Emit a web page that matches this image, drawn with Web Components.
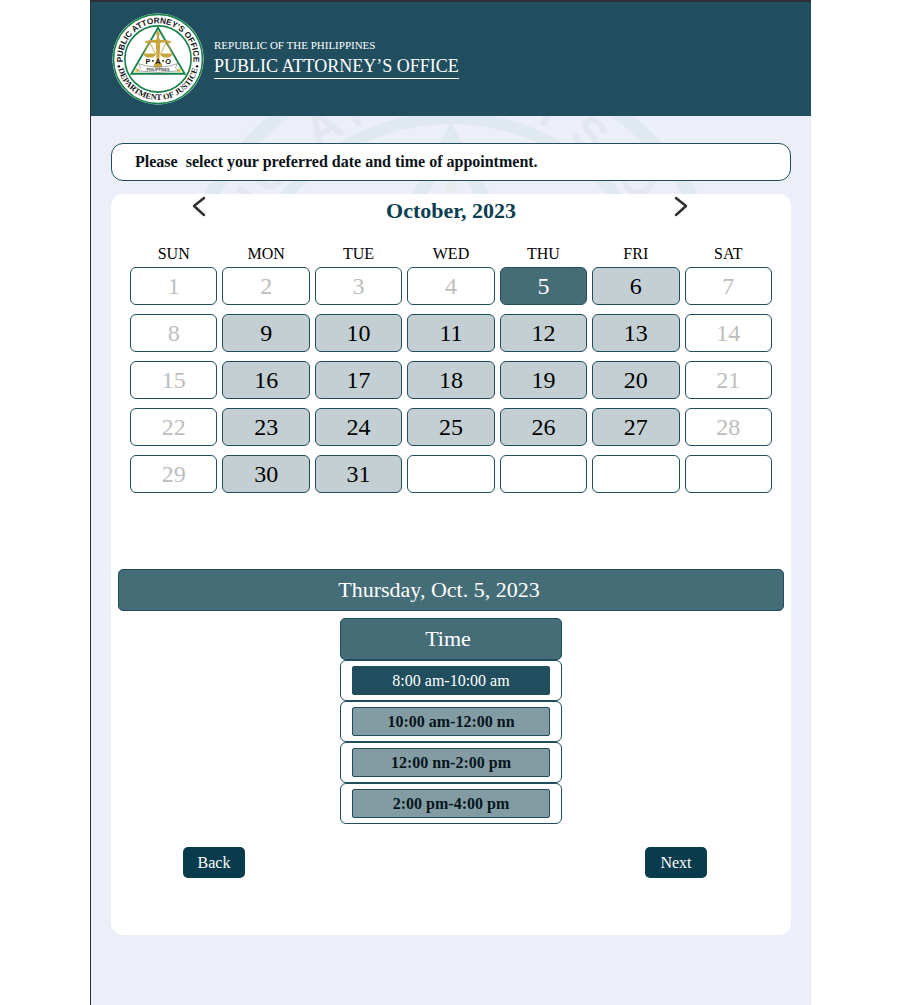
<!DOCTYPE html>
<html lang="en">
<head>
<meta charset="utf-8">
<meta name="viewport" content="width=device-width, initial-scale=1">
<title>Public Attorney's Office - Appointment</title>
<style>
  body { margin: 0; background: #fff; font-family: "Liberation Serif", "Times New Roman", serif; }
</style>
</head>
<body>
<booking-page>
  <office-header slot="header">
    <pao-seal></pao-seal>
    <span slot="country">REPUBLIC OF THE PHILIPPINES</span>
    <span slot="office">PUBLIC ATTORNEY’S OFFICE</span>
  </office-header>
  <notice-bar>Please&nbsp; select your preferred date and time of appointment.</notice-bar>
  <booking-card>
    <month-calendar slot="calendar" days="31" open="6 9 10 11 12 13 16 17 18 19 20 23 24 25 26 27 30 31" selected="5">October, 2023</month-calendar>
    <time-picker slot="times" slots="8:00 am-10:00 am|10:00 am-12:00 nn|12:00 nn-2:00 pm|2:00 pm-4:00 pm" selected="0">Thursday, Oct. 5, 2023</time-picker>
    <nav-button slot="actions">Back</nav-button>
    <nav-button slot="actions">Next</nav-button>
  </booking-card>
</booking-page>

<script>
class ShadowElement extends HTMLElement {
  render(html) {
    this.attachShadow({ mode: "open" }).innerHTML = html;
  }
}

customElements.define("pao-seal", class extends ShadowElement {
  connectedCallback() {
    this.render(`
      <style>
        :host { display: block; width: 92px; height: 92px; flex: none; }
        svg { display: block; width: 100%; height: 100%; }
        .disc { fill: #fff; }
        .ring { fill: none; stroke: #16824a; }
        .gold { fill: #c9a540; }
        .star { fill: #e8c23c; }
        .chain { fill: none; stroke: #c9a540; stroke-width: 1; }
        .ribbon { fill: #fff; stroke: #777; stroke-width: .7; }
        text { font-family: "Liberation Sans", Arial, sans-serif; font-weight: 700; fill: #151515; text-anchor: middle; }
        .arc { font-size: 9px; }
        .dept { font-family: "Liberation Serif", serif; font-size: 9px; }
        .pao { font-size: 8px; }
        .phil { font-size: 4px; fill: #444; }
      </style>
      <svg viewBox="0 0 100 100" role="img" aria-label="Seal of the Public Attorney's Office">
        <defs>
          <path id="top" d="M12 56 A38.500 38.500 0 1 1 88 56"/>
          <path id="bottom" d="M5.500 50 A44.500 44.500 0 0 0 94.500 50"/>
        </defs>
        <circle cx="50" cy="50" r="49.500" class="disc"/>
        <circle cx="50" cy="50" r="48.300" class="ring" stroke-width="1.600"/>
        <circle cx="50" cy="50" r="36" class="ring" stroke-width="1.800"/>
        <path d="M50 16 L79 66 H21 Z" class="ring" stroke-width="2"/>
        <path class="gold" d="M50 19l2 3-1 4 1.500 4-1 22 3 4v5h-9v-5l3-4-1-22L49 26l-1-4z"/>
        <path class="gold" d="M36 31q7-3 14-1 7-2 14 1v2q-7-2-14 0-7-2-14 0z"/>
        <path class="gold" d="M34 44h14q-1 4.500-7 4.500T34 44zM52 44h14q-1 4.500-7 4.500T52 44z"/>
        <path class="chain" d="M40 32l-5 12M41 32l6 12M60 32l5 12M59 32l-6 12"/>
        <path class="star" d="M27 59.500l.8 1.700 1.900.2-1.400 1.300.4 1.900-1.700-.9-1.700.9.4-1.900-1.400-1.300 1.900-.2zM73 59.500l.8 1.700 1.900.2-1.400 1.300.4 1.900-1.700-.9-1.700.9.400-1.900-1.400-1.300 1.900-.2z"/>
        <path class="ribbon" d="M29 55l8 2.500q13 3 26 0l8-2.500-2 4.500 3 3.500-8 .5q-14 2-28 0l-8-.5 3-3.500z"/>
        <text class="arc"><textPath href="#top" startOffset="50%">PUBLIC ATTORNEY'S OFFICE</textPath></text>
        <text class="dept"><textPath href="#bottom" startOffset="50%">DEPARTMENT OF JUSTICE</textPath></text>
        <circle cx="7.500" cy="58" r="1.300"/><circle cx="92.500" cy="58" r="1.300"/>
        <text class="pao" x="39" y="55">P</text>
        <text class="pao" x="50" y="55">A</text>
        <text class="pao" x="61" y="55">O</text>
        <circle cx="44.500" cy="52" r="1"/><circle cx="55.500" cy="52" r="1"/>
        <text class="phil" x="50" y="62.500">PHILIPPINES</text>
      </svg>`);
  }
});

customElements.define("seal-watermark", class extends ShadowElement {
  connectedCallback() {
    const letters = [["I", -56], ["C", -49], ["A", -32], ["T", -24], ["Y", 24], ["S", 35], ["O", 51], ["F", 61]];
    this.render(`
      <style>
        :host { display: block; overflow: hidden; }
        svg { display: block; width: 580px; margin: -74px auto 0; overflow: visible; }
        .ring { fill: none; stroke: #e1e9f0; }
        .dot { fill: #e9ebec; }
        text { font: 700 46px "Liberation Sans", Arial, sans-serif; fill: #e3e7ef; text-anchor: middle; }
      </style>
      <svg viewBox="0 0 580 580" aria-hidden="true">
        <circle class="ring" cx="290" cy="290" r="276" stroke-width="14"/>
        <circle class="ring" cx="290" cy="290" r="214" stroke-width="12"/>
        <path class="ring" stroke-width="14" d="M290 95 L440 373 H140 Z"/>
        <circle class="dot" cx="290" cy="145" r="6"/>
        ${letters.map(([c, a]) => `<text x="290" y="64" transform="rotate(${a} 290 290)">${c}</text>`).join("")}
      </svg>`);
  }
});

customElements.define("booking-page", class extends ShadowElement {
  connectedCallback() {
    this.render(`
      <style>
        :host { display: block; box-sizing: border-box; min-height: 100vh; margin: 0 calc(10% - 1px) 0 10%;
          border-left: 1px solid #2e2e33; background: #eceff8; }
        .body { position: relative; padding: 27px 20px 70px; }
        seal-watermark { position: absolute; inset: 0; }
        main { position: relative; display: flex; flex-direction: column; gap: 13px; }
      </style>
      <slot name="header"></slot>
      <div class="body">
        <seal-watermark></seal-watermark>
        <main><slot></slot></main>
      </div>`);
  }
});

customElements.define("office-header", class extends ShadowElement {
  connectedCallback() {
    this.render(`
      <style>
        :host { display: block; }
        header { display: flex; align-items: center; gap: 10px; box-sizing: border-box; height: 116px;
          padding: 0 21px; border-top: 2px solid #2e2e33; background: #204e5e; color: #fff; }
        .names { display: flex; flex-direction: column; gap: 4px; }
        .country { font-size: 11px; line-height: 13px; }
        h1 { margin: 0; padding-bottom: 2px; border-bottom: 1px solid #fff; font-size: 18px; line-height: 20px; font-weight: 400; }
      </style>
      <header>
        <slot></slot>
        <div class="names">
          <div class="country"><slot name="country"></slot></div>
          <h1><slot name="office"></slot></h1>
        </div>
      </header>`);
  }
});

customElements.define("notice-bar", class extends ShadowElement {
  connectedCallback() {
    this.render(`
      <style>
        :host { display: block; }
        p { margin: 0; padding: 9px 23px; border: 1px solid #204e5e; border-radius: 12px; background: #fff;
          color: #0b1418; font-size: 16px; line-height: 18px; font-weight: 700; }
      </style>
      <p><slot></slot></p>`);
  }
});

customElements.define("booking-card", class extends ShadowElement {
  connectedCallback() {
    this.render(`
      <style>
        :host { display: block; border-radius: 12px; background: #fff; padding: 0 7px 57px; }
        .times { padding-top: 67px; }
        .actions { display: flex; justify-content: space-between; padding: 23px 77px 0 65px; }
      </style>
      <slot name="calendar"></slot>
      <div class="times"><slot name="times"></slot></div>
      <div class="actions"><slot name="actions"></slot></div>`);
  }
});

customElements.define("month-calendar", class extends ShadowElement {
  connectedCallback() {
    const total = Number(this.getAttribute("days"));
    const open = this.getAttribute("open").split(" ").map(Number);
    const selected = Number(this.getAttribute("selected"));
    const cell = day => {
      if (day > total) return `<td><div class="blank"></div></td>`;
      if (day === selected) return `<td><button class="selected" aria-pressed="true">${day}</button></td>`;
      if (open.includes(day)) return `<td><button>${day}</button></td>`;
      return `<td><button disabled>${day}</button></td>`;
    };
    let rows = "";
    for (let w = 0; w < 5; w++) {
      rows += "<tr>" + [1, 2, 3, 4, 5, 6, 7].map(d => cell(w * 7 + d)).join("") + "</tr>";
    }
    const names = ["SUN", "MON", "TUE", "WED", "THU", "FRI", "SAT"];
    this.render(`
      <style>
        :host { display: block; }
        .bar { display: flex; justify-content: space-between; align-items: flex-start; padding: 0 95px 0 73px; height: 50px; }
        .arrow { padding: 0; border: 0; background: none; width: 16px; height: 24px; }
        .arrow svg { display: block; width: 16px; height: 24px; fill: none; stroke: #2e2e33; stroke-width: 2.500; stroke-linecap: round; stroke-linejoin: round; }
        h2 { margin: 4px 0 0 22px; font-size: 22px; line-height: 26px; color: #0a3e50; }
        table { width: calc(100% - 14px); margin: 0 7px; table-layout: fixed; border-collapse: separate; border-spacing: 5px 0; }
        th { padding: 0 0 3px; font-size: 16px; line-height: 20px; font-weight: 400; color: #000; }
        td { padding: 0 0 9px; }
        button, .blank { display: block; box-sizing: border-box; width: 100%; height: 38px; border-radius: 6px;
          border: 1px solid #204e5e; background: #c3cfd3; color: #000; padding: 0; font: 24px/36px "Liberation Serif", serif; }
        button:disabled, .blank { background: #fff; color: #bdbdbd; }
        .selected { background: #456d78; color: #fff; }
      </style>
      <div class="bar">
        <button class="arrow" aria-label="Previous month"><svg viewBox="0 0 16 24"><path d="M13 4 L3 12 L13 21"/></svg></button>
        <h2><slot></slot></h2>
        <button class="arrow" aria-label="Next month"><svg viewBox="0 0 16 24"><path d="M3 4 L13 12 L3 21"/></svg></button>
      </div>
      <table>
        <thead><tr>${names.map(n => `<th scope="col">${n}</th>`).join("")}</tr></thead>
        <tbody>${rows}</tbody>
      </table>`);
  }
});

customElements.define("time-picker", class extends ShadowElement {
  connectedCallback() {
    const selected = Number(this.getAttribute("selected"));
    const items = this.getAttribute("slots").split("|").map((t, i) =>
      `<li><button class="${i === selected ? "selected" : ""}" aria-pressed="${i === selected}">${t}</button></li>`).join("");
    this.render(`
      <style>
        :host { display: block; }
        h2, h3 { margin: 0; box-sizing: border-box; height: 42px; border: 1px solid #204e5e; border-radius: 5px;
          background: #456d78; color: #fff; font-size: 22px; line-height: 40px; font-weight: 400; text-align: center; }
        h2 { padding-right: 24px; }
        h3 { padding-right: 6px; }
        .column { width: 222px; margin: 7px auto 0; }
        ul { list-style: none; margin: 0; padding: 0; }
        li { box-sizing: border-box; height: 41px; padding: 5px 11px; border: 1px solid #204e5e; border-radius: 6px; }
        button { display: block; box-sizing: border-box; width: 100%; height: 29px; padding: 0; border: 1px solid #204e5e;
          border-radius: 2px; background: #839ca3; color: #06161c; font: 700 16px/27px "Liberation Serif", serif; }
        .selected { background: #204e5e; color: #fff; font-weight: 400; }
      </style>
      <h2><slot></slot></h2>
      <div class="column"><h3>Time</h3><ul>${items}</ul></div>`);
  }
});

customElements.define("nav-button", class extends ShadowElement {
  connectedCallback() {
    this.render(`
      <style>
        :host { display: block; }
        button { display: block; width: 62px; height: 31px; padding: 0; border: 0; border-radius: 5px;
          background: #083b4c; color: #fff; font: 16px/30px "Liberation Serif", serif; }
      </style>
      <button><slot></slot></button>`);
  }
});
</script>
</body>
</html>
